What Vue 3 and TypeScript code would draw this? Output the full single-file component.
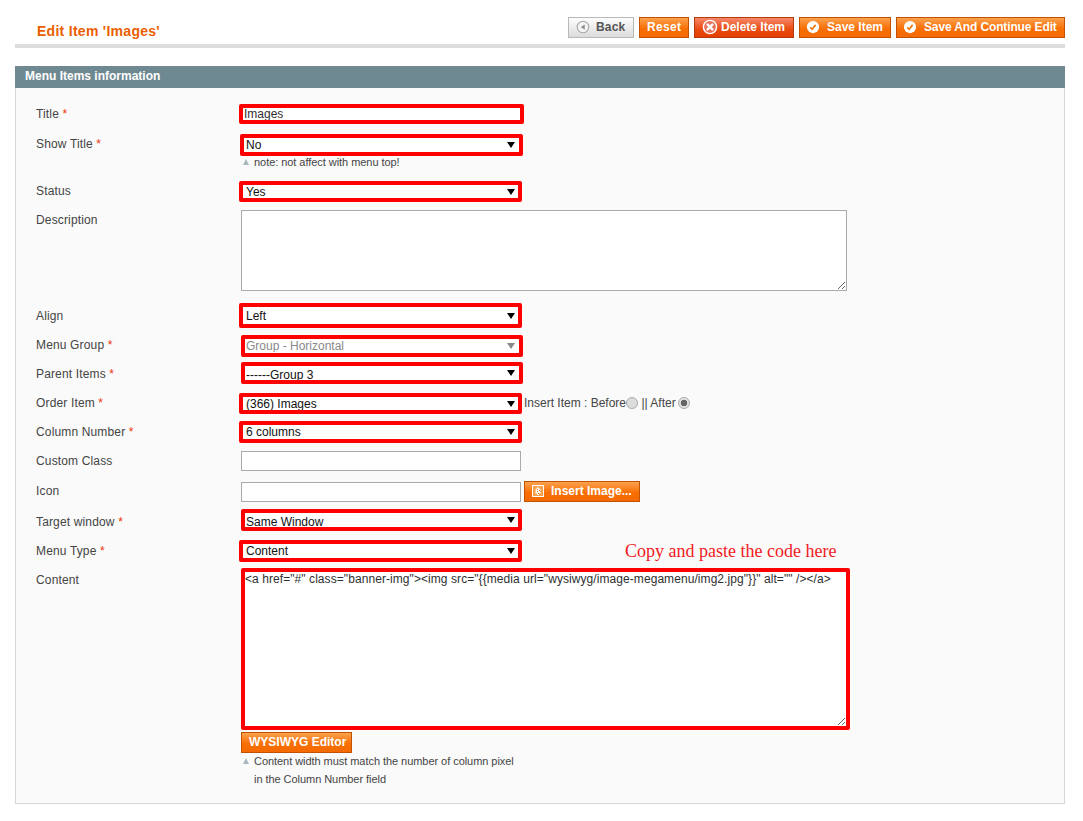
<script setup lang="ts">
interface Row {
  label: string
  req?: boolean
  kind: 'input' | 'select' | 'area'
  value?: string
  disabled?: boolean
  plain?: boolean
  top: number
  left: number
  width: number
  height: number
  labelTop: number
  shift?: number
  note?: boolean
  extra?: 'order' | 'image' | 'content'
}

// top = gap above the control, left = offset from the control column
const rows: Row[] = [
  { label: 'Title', req: true, kind: 'input', value: 'Images', top: 0, left: 0, width: 285, height: 20, labelTop: 0 },
  { label: 'Show Title', req: true, kind: 'select', value: 'No', top: 10, left: 1, width: 283, height: 22, labelTop: 0, shift: -1, note: true },
  { label: 'Status', kind: 'select', value: 'Yes', top: 0, left: 0, width: 283, height: 21, labelTop: 0 },
  { label: 'Description', kind: 'area', plain: true, top: 8, left: 2, width: 606, height: 81, labelTop: 0 },
  { label: 'Align', kind: 'select', value: 'Left', top: 12, left: 0, width: 283, height: 25, labelTop: 3 },
  { label: 'Menu Group', req: true, kind: 'select', value: 'Group - Horizontal', disabled: true, top: 7, left: 2, width: 282, height: 22, labelTop: 0, shift: -1 },
  { label: 'Parent Items', req: true, kind: 'select', value: '------Group 3', top: 5, left: 2, width: 282, height: 22, labelTop: 2, shift: 1 },
  { label: 'Order Item', req: true, kind: 'select', value: '(366) Images', top: 9, left: 0, width: 283, height: 21, labelTop: 0, extra: 'order' },
  { label: 'Column Number', req: true, kind: 'select', value: '6 columns', top: 7, left: 0, width: 283, height: 22, labelTop: 1 },
  { label: 'Custom Class', kind: 'input', plain: true, top: 8, left: 2, width: 280, height: 20, labelTop: 0 },
  { label: 'Icon', kind: 'input', plain: true, top: 11, left: 2, width: 280, height: 20, labelTop: -1, extra: 'image' },
  { label: 'Target window', req: true, kind: 'select', value: 'Same Window', top: 7, left: 2, width: 281, height: 22, labelTop: 3, shift: 1 },
  { label: 'Menu Type', req: true, kind: 'select', value: 'Content', top: 8, left: 0, width: 283, height: 22, labelTop: 1, shift: -1 },
  { label: 'Content', kind: 'area', value: '<a href="#" class="banner-img"><img src="{{media url="wysiwyg/image-megamenu/img2.jpg"}}" alt="" /></a>', top: 6, left: 2, width: 609, height: 162, labelTop: 2, extra: 'content' },
]

const selectStyle = (r: Row) => ({
  paddingLeft: 3 - r.left + 'px',
  paddingTop: Math.max(r.shift ?? 0, 0) * 2 + 'px',
  paddingBottom: Math.max(-(r.shift ?? 0), 0) + 'px',
})

const actions = [
  { text: 'Reset', cls: 'reset', icon: '' },
  { text: 'Delete Item', cls: 'danger', icon: 'delete' },
  { text: 'Save Item', cls: 'has-save', icon: 'save' },
  { text: 'Save And Continue Edit', cls: 'has-save wide', icon: 'save' },
]
</script>

<template>
  <div class="page">
    <header class="head">
      <h1>Edit Item 'Images'</h1>
      <div class="actions">
        <button class="btn back" type="button">
          <svg class="ic" viewBox="0 0 16 16" width="14" height="14">
            <circle cx="8" cy="8" r="6.600" fill="#f4f4f4" stroke="#a9a9a9" stroke-width="1.300" />
            <path d="M10 5v6L5.500 8z" fill="#8d8d8d" />
          </svg>
          Back
        </button>
        <button v-for="a in actions" :key="a.text" class="btn" :class="a.cls" type="button">
          <svg v-if="a.icon === 'delete'" class="ic" viewBox="0 0 16 16" width="16" height="16">
            <circle cx="8" cy="8" r="6.600" fill="#e9705a" stroke="#fff" stroke-width="1.400" />
            <path d="M5.600 5.600l4.800 4.800M10.400 5.600l-4.800 4.800" stroke="#fff" stroke-width="2.400" stroke-linecap="round" />
          </svg>
          <svg v-else-if="a.icon === 'save'" class="ic" viewBox="0 0 16 16" width="14" height="14">
            <circle cx="8" cy="8" r="7" fill="#fff" />
            <path d="M4.800 8.400l2.200 2.200 4-5" fill="none" stroke="#f07a12" stroke-width="2" />
          </svg>
          {{ a.text }}
        </button>
      </div>
    </header>

    <section class="panel">
      <h2>Menu Items information</h2>
      <div class="form">
        <div v-for="r in rows" :key="r.label" class="row" :style="{ marginTop: r.top + 'px' }">
          <label class="lbl" :style="{ marginTop: r.labelTop + 'px' }">{{ r.label }}<span v-if="r.req" class="req"> *</span></label>
          <div class="val" :style="{ marginLeft: r.left + 'px' }">
            <div class="line">
              <input
                v-if="r.kind === 'input'"
                class="ctl"
                :class="{ red: !r.plain }"
                :value="r.value"
                :style="{ width: r.width + 'px', height: r.height + 'px' }"
              />
              <span v-else-if="r.kind === 'select'" class="sel" :class="{ off: r.disabled }" :style="{ width: r.width + 'px', height: r.height + 'px' }">
                <select class="ctl red" :disabled="r.disabled" :style="selectStyle(r)"><option>{{ r.value }}</option></select>
                <i class="arrow" :style="{ left: 268 - r.left + 'px' }"></i>
              </span>
              <textarea
                v-else
                class="ctl"
                :class="{ red: !r.plain }"
                :value="r.value"
                :style="{ width: r.width + 'px', height: r.height + 'px' }"
              ></textarea>

              <span v-if="r.extra === 'order'" class="order">
                Insert Item : Before<input class="radio" type="radio" name="pos" />&nbsp;|| After&nbsp;<input class="radio last" type="radio" name="pos" checked />
              </span>
              <button v-if="r.extra === 'image'" class="btn insert" type="button">
                <svg class="ic" viewBox="0 0 12 12" width="12" height="12">
                  <rect width="12" height="12" fill="#fff" />
                  <rect x="1" y="1" width="10" height="10" fill="#f9a14c" />
                  <path d="M6 2l3 3-1 1 1 2-2 .5V10H5V8.500L3 8l1-2-1-1z" fill="#fff" />
                  <path d="M5 4h1v1H5zM7 5h1v1H7zM5 6h1v1H5zM6 8h1v1H6z" fill="#d9630a" />
                </svg>
                Insert Image...
              </button>
              <span v-if="r.extra === 'content'" class="hint">Copy and paste the code here</span>
            </div>
            <p v-if="r.note" class="note first">note: not affect with menu top!</p>
            <template v-if="r.extra === 'content'">
              <button class="btn wysiwyg" type="button">WYSIWYG Editor</button>
              <p class="note">Content width must match the number of column pixel<br />in the Column Number field</p>
            </template>
          </div>
        </div>
      </div>
    </section>
  </div>
</template>

<style>
html,
body {
  margin: 0;
  background: #fff;
}
</style>

<style scoped>
.page {
  width: 1050px;
  height: 821px;
  margin-left: 15px;
  font: 12px/16px "Liberation Sans", Arial, sans-serif;
  color: #444;
}
.head {
  display: flex;
  justify-content: space-between;
  height: 48px;
  padding-top: 17px;
  box-sizing: border-box;
  border-bottom: 4px solid #ddd;
}
h1 {
  margin: 6px 0 0 22px;
  font-size: 14px;
  line-height: 16px;
  font-weight: bold;
  letter-spacing: 0.28px;
  color: #eb5e00;
}
.actions {
  display: flex;
  gap: 5px;
  height: 21px;
}
.btn {
  display: inline-flex;
  align-items: center;
  justify-content: flex-start;
  gap: 8px;
  height: 21px;
  box-sizing: border-box;
  padding: 0 0 1px 7px;
  border: 1px solid #c35200;
  background: linear-gradient(#fba24e, #f86f06 55%, #f46a00);
  color: #fff;
  font: bold 12px/16px "Liberation Sans", Arial, sans-serif;
  white-space: nowrap;
  cursor: pointer;
}
.btn.back {
  width: 66px;
  gap: 6px;
  border-color: #b9b9b9;
  background: linear-gradient(#fdfdfd, #dcdcdc);
  color: #555;
  letter-spacing: 0.2px;
}
.btn.reset {
  width: 50px;
  letter-spacing: 0.3px;
}
.btn.danger {
  width: 100px;
  gap: 3px;
  border-color: #b63a0c;
  background: linear-gradient(#f6886b, #e94a10 60%, #e43f00);
}
.btn.has-save {
  width: 92px;
  gap: 7px;
  padding-left: 6px;
}
.btn.has-save.wide {
  width: 169px;
  letter-spacing: -0.13px;
}
.ic {
  flex: none;
}
.panel {
  margin-top: 18px;
}
h2 {
  margin: 0;
  height: 22px;
  padding-left: 10px;
  background: #6f8992;
  color: #fff;
  font-size: 12px;
  font-weight: bold;
  line-height: 21px;
}
.form {
  height: 716px;
  box-sizing: border-box;
  padding: 16px 0 0 20px;
  background: #fafafa;
  border: 1px solid #d6d6d6;
  border-top: 0;
}
.row {
  display: flex;
  align-items: flex-start;
}
.lbl {
  flex: none;
  width: 203px;
  line-height: 20px;
  letter-spacing: 0.15px;
}
.req {
  color: #eb340a;
}
.line {
  display: flex;
  align-items: flex-start;
  position: relative;
}
.ctl {
  display: block;
  box-sizing: border-box;
  margin: 0;
  background: #fff;
  border: 1px solid #aaa;
  border-radius: 0;
  font: 12px/14px "Liberation Sans", Arial, sans-serif;
  color: #2f2f2f;
  outline: 0;
}
input.ctl {
  padding: 0 1px;
}
textarea.ctl {
  padding: 0;
  letter-spacing: 0.07px;
  resize: both;
  overflow: auto;
}
.red {
  border: 4px solid #f00;
  border-radius: 2px;
}
.sel {
  display: block;
  position: relative;
  flex: none;
}
.sel select {
  width: 100%;
  height: 100%;
  padding-right: 0;
  appearance: none;
  color: #111;
}
.arrow {
  position: absolute;
  top: 50%;
  margin-top: -3px;
  border: 4px solid transparent;
  border-top: 6px solid #000;
  border-bottom: 0;
  pointer-events: none;
}
.sel.off select {
  color: #888;
  opacity: 1;
}
.sel.off .arrow {
  border-top-color: #888;
}
.order {
  display: flex;
  align-items: center;
  margin-left: 2px;
  height: 20px;
  white-space: nowrap;
}
.radio {
  appearance: none;
  width: 12px;
  height: 12px;
  margin: 0;
  flex: none;
  border: 1px solid #aaa;
  border-radius: 50%;
  background: #ddd;
}
.radio.last {
  margin-left: -1px;
}
.radio:checked {
  background: radial-gradient(circle, #666 0 3px, #e4e4e4 3.600px);
}
.btn.insert {
  margin: -1px 0 0 3px;
  width: 116px;
  gap: 7px;
}
.hint {
  position: absolute;
  left: 384px;
  top: -27px;
  font: 18px/20px "Liberation Serif", "Times New Roman", serif;
  color: #f01a24;
  white-space: nowrap;
}
.btn.wysiwyg {
  display: flex;
  width: 111px;
  margin-top: 2px;
}
.note {
  margin: -1px 0 0;
  position: relative;
  padding-left: 13px;
  font-size: 11px;
  line-height: 18px;
  letter-spacing: -0.05px;
  color: #444;
}
.note::before {
  content: "";
  position: absolute;
  left: 2px;
  top: 6px;
  border: 3px solid transparent;
  border-bottom: 6px solid #a9b8bd;
  border-top: 0;
}
.note.first {
  height: 25px;
  margin: 0 0 0 1px;
  line-height: 12px;
}
.note.first::before {
  top: 3px;
}
</style>
